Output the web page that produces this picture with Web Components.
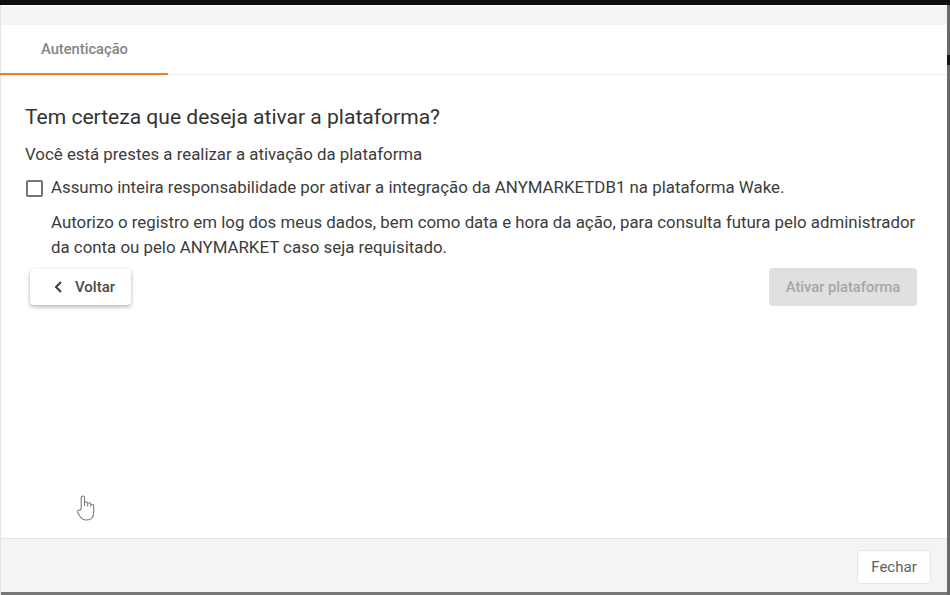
<!DOCTYPE html>
<html lang="pt-BR">
<head>
<meta charset="utf-8">
<title>Autenticação</title>
<style>
  html, body { margin: 0; height: 100%; background: #fff; }
  body { font-family: Roboto, "Liberation Sans", sans-serif; overflow: hidden; }
</style>
</head>
<body>

<auth-dialog>
  <tab-bar label="Autenticação"></tab-bar>
  <activation-panel></activation-panel>
  <dialog-button slot="footer" kind="plain">Fechar</dialog-button>
</auth-dialog>

<script>
class AuthDialog extends HTMLElement {
  constructor() {
    super();
    this.attachShadow({mode: 'open'}).innerHTML = `
      <style>
        :host {
          display: flex;
          flex-direction: column;
          width: 950px;
          height: 595px;
          background: #0e0e0e;
          box-sizing: border-box;
          padding-top: 5px;
          position: relative;
        }
        .frame {
          flex: 1;
          display: flex;
          min-height: 0;
        }
        .window {
          flex: 1;
          display: flex;
          flex-direction: column;
          min-width: 0;
          background: #fff;
          border-left: 1px solid #e4e4e4;
          padding-top: 1px;
        }
        .strip {
          height: 19px;
          background: #f4f4f4;
        }
        .body {
          flex: 1;
          min-height: 0;
          display: flex;
          flex-direction: column;
        }
        .footer {
          height: 54px;
          box-sizing: border-box;
          background: #f4f4f4;
          border-top: 1px solid #e6e6e6;
          display: flex;
          align-items: center;
          justify-content: flex-end;
          padding: 3px 16px 0 0;
        }
        .gutter {
          width: 3px;
          background: #6a6a6a;
        }
        .base {
          height: 3px;
          background: #777;
        }
        .notch {
          position: absolute;
          right: 0;
          top: 55px;
          width: 3px;
          height: 10px;
          background: #141414;
        }
        .cursor {
          position: absolute;
          left: 74px;
          top: 494px;
        }
      </style>
      <div class="frame">
        <div class="window">
          <div class="strip"></div>
          <div class="body"><slot></slot></div>
          <div class="footer"><slot name="footer"></slot></div>
          <div class="base"></div>
        </div>
        <div class="gutter"></div>
      </div>
      <div class="notch"></div>
      <svg class="cursor" width="24" height="30" viewBox="0 0 20 27" preserveAspectRatio="none" fill="#fff" stroke="#7c7c7c" stroke-width=".9" stroke-linejoin="round">
        <path d="M6 13V3.2a1.4 1.4 0 0 1 2.8 0V10.500V8.400a1.300 1.300 0 0 1 2.600 0v2.400V9.200a1.300 1.300 0 0 1 2.600 0v2V10.400a1.200 1.200 0 0 1 2.400 0v6.100c0 4-1.800 7-5.800 7H10c-2.500 0-3.700-1.200-4.800-3L2.800 16.300c-.7-1.300 1.100-2.600 2.200-1.400Z"/>
      </svg>
    `;
  }
}

class TabBar extends HTMLElement {
  constructor() {
    super();
    this.attachShadow({mode: 'open'}).innerHTML = `
      <style>
        :host {
          display: flex;
          height: 50px;
          box-sizing: border-box;
          border-bottom: 1px solid #eeeeee;
        }
        .tab {
          width: 168px;
          height: 50px;
          margin-left: -1px;
          box-sizing: border-box;
          border-bottom: 2px solid #ee7f31;
          padding-left: 41px;
          display: flex;
          align-items: center;
          font-size: 14.7px;
          font-weight: 500;
          color: #858585;
        }
      </style>
      <div class="tab"></div>
    `;
  }

  connectedCallback() {
    this.shadowRoot.querySelector('.tab').textContent = this.getAttribute('label');
  }
}

class DialogButton extends HTMLElement {
  constructor() {
    super();
    this.attachShadow({mode: 'open'}).innerHTML = `
      <style>
        :host {
          display: inline-flex;
          align-items: center;
          justify-content: center;
          gap: 13px;
          box-sizing: border-box;
          border-radius: 4px;
          font-size: 14.7px;
          font-weight: 500;
          color: #4a4a4a;
          background: #fff;
        }
        :host([kind="raised"]) {
          justify-content: flex-start;
          width: 101px;
          height: 36px;
          padding-left: 24px;
          font-size: 15px;
          box-shadow: 0 2px 4px rgba(0,0,0,.28), 0 0 2px rgba(0,0,0,.08);
        }
        :host([kind="disabled"]) {
          width: 148px;
          height: 38px;
          background: #e0e0e0;
          color: #a6a6a6;
        }
        :host([kind="plain"]) {
          width: 74px;
          height: 34px;
          border: 1px solid #e6e6e6;
          font-weight: 400;
          font-size: 15px;
          color: #616161;
        }
      </style>
      <slot name="icon"></slot><slot></slot>
    `;
  }
}

class CheckRow extends HTMLElement {
  constructor() {
    super();
    this.attachShadow({mode: 'open'}).innerHTML = `
      <style>
        :host {
          display: flex;
          gap: 8px;
          align-items: flex-start;
        }
        .box {
          flex: none;
          width: 13px;
          height: 13px;
          margin: 5px 0 0 1px;
          border: 2px solid #757575;
          border-radius: 2px;
        }
        .text {
          display: flex;
          flex-direction: column;
          gap: 10px;
          line-height: 25px;
        }
      </style>
      <span class="box"></span>
      <div class="text"><slot></slot></div>
    `;
  }
}

class ActivationPanel extends HTMLElement {
  constructor() {
    super();
    this.attachShadow({mode: 'open'}).innerHTML = `
      <style>
        :host {
          display: flex;
          flex-direction: column;
          padding: 30px 30px 0 24px;
          color: #3c3c3c;
          font-size: 16.85px;
        }
        h2 {
          margin: 0;
          font-size: 21.05px;
          line-height: 24px;
          font-weight: 400;
          color: #333;
        }
        p {
          margin: 15px 0 11px;
          line-height: 20px;
        }
        .actions {
          display: flex;
          justify-content: space-between;
          align-items: center;
          margin: 8px 0 0 5px;
        }
        svg { display: block; }
      </style>
      <h2>Tem certeza que deseja ativar a plataforma?</h2>
      <p>Você está prestes a realizar a ativação da plataforma</p>
      <check-row>
        <div>Assumo inteira responsabilidade por ativar a integração da ANYMARKETDB1 na plataforma Wake.</div>
        <div>Autorizo o registro em log dos meus dados, bem como data e hora da ação, para consulta futura pelo administrador da conta ou pelo ANYMARKET caso seja requisitado.</div>
      </check-row>
      <div class="actions">
        <dialog-button kind="raised">
          <svg slot="icon" width="8" height="12" viewBox="0 0 8 12" fill="none" stroke="#3c3c3c" stroke-width="2"><path d="M7 1 2 6l5 5"/></svg>
          Voltar
        </dialog-button>
        <dialog-button kind="disabled">Ativar plataforma</dialog-button>
      </div>
    `;
  }
}

customElements.define('auth-dialog', AuthDialog);
customElements.define('tab-bar', TabBar);
customElements.define('dialog-button', DialogButton);
customElements.define('check-row', CheckRow);
customElements.define('activation-panel', ActivationPanel);
</script>
</body>
</html>
